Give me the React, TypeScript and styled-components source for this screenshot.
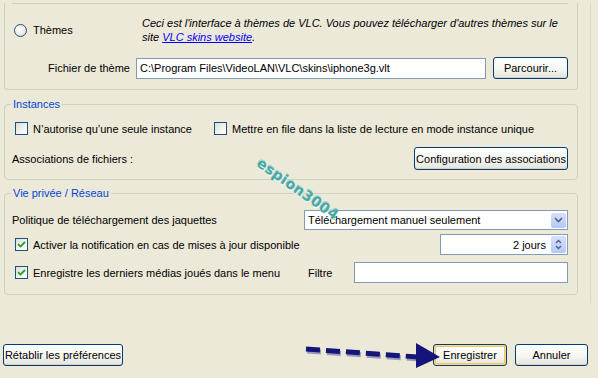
import React from "react";
import styled, { createGlobalStyle, css } from "styled-components";

const GlobalStyle = createGlobalStyle`
  html, body {
    margin: 0;
    padding: 0;
    background: #ece9d8;
  }
  body {
    font-family: "Liberation Sans", Arial, sans-serif;
    font-size: 11px;
    color: #000;
  }
`;

// whole dialog surface
const Page = styled.div`
  position: relative;
  width: 598px;
  height: 378px;
  overflow: hidden;
  background: #ece9d8;
`;

// scrolling settings area, with its faint right edge
const SettingsPanel = styled.div`
  width: 591px;
  height: 300px;
  border-right: 1px solid #dcd9c8;
  box-sizing: border-box;
`;

// top group, its upper part is cut off by the screenshot
const ThemeBox = styled.div`
  height: 87px;
  margin: 0 12px 0 4px;
  border: 1px solid #d0d0bf;
  border-top: none;
  border-radius: 0 0 4px 4px;
  box-sizing: border-box;
`;

const Separator = styled.div`
  height: 1px;
  margin: 3px 9px 0 7px;
  background: #d0d0bf;
`;

const ThemeRow = styled.div`
  display: grid;
  grid-template-columns: 137px 1fr;
  margin-top: 12px;
  height: 28px;
`;

const RadioLabel = styled.label`
  display: flex;
  align-items: center;
  gap: 6px;
  padding-left: 9px;
`;

const Radio = styled.span`
  width: 11px;
  height: 11px;
  border-radius: 50%;
  border: 1px solid #1c5180;
  background: radial-gradient(circle at 40% 35%, #ffffff 0%, #f0f0ea 45%, #d6d6ce 100%);
`;

const Description = styled.p`
  margin: 0;
  font-style: italic;
  line-height: 14px;
  white-space: nowrap;
`;

const Link = styled.a`
  color: #0000ff;
  text-decoration: underline;
`;

const FileRow = styled.div`
  display: flex;
  align-items: center;
  margin-top: 13px;
`;

const RightLabel = styled.span<{ $width: number }>`
  width: ${(p) => p.$width}px;
  text-align: right;
  margin-right: 6px;
`;

const TextField = styled.div<{ $width: number; $align?: string }>`
  width: ${(p) => p.$width}px;
  height: 21px;
  box-sizing: border-box;
  border: 1px solid #7f9db9;
  background: #fff;
  display: flex;
  align-items: center;
  justify-content: ${(p) => p.$align || "flex-start"};
  padding: 0 3px;
  white-space: nowrap;
  overflow: hidden;
`;

const Button = styled.button<{ $width: number; $height?: number; $default?: boolean }>`
  width: ${(p) => p.$width}px;
  height: ${(p) => p.$height || 22}px;
  box-sizing: border-box;
  padding: 0;
  font: inherit;
  color: #000;
  border: 1px solid #003c74;
  border-radius: 3px;
  background: linear-gradient(#ffffff 0%, #f4f4f0 60%, #e3e2da 100%);
  box-shadow: inset 0 -1px 0 #d6d0c5;
  white-space: nowrap;
  ${(p) =>
    p.$default &&
    css`
      box-shadow: inset 0 0 0 1px #fbd98a, inset 0 0 0 2px #f5c45e;
    `}
`;

const GroupBox = styled.fieldset<{ $top: number }>`
  margin: ${(p) => p.$top}px 12px 0 4px;
  padding: 0 9px 0 0;
  border: 1px solid #d0d0bf;
  border-radius: 4px;
  min-width: 0;
`;

const Legend = styled.legend`
  margin-left: 6px;
  padding: 0 2px;
  color: #0046d5;
  line-height: 13px;
`;

const Row = styled.div<{ $mt: number; $mb?: number; $pl?: number }>`
  display: flex;
  align-items: center;
  justify-content: space-between;
  margin-top: ${(p) => p.$mt}px;
  margin-bottom: ${(p) => p.$mb ?? 0}px;
  padding-left: ${(p) => p.$pl ?? 7}px;
`;

const CheckRow = styled(Row)`
  justify-content: flex-start;
  gap: 22px;
`;

const CheckLabel = styled.label`
  display: flex;
  align-items: center;
  gap: 5px;
  white-space: nowrap;
`;

const Box = styled.span`
  width: 11px;
  height: 11px;
  border: 1px solid #1c5180;
  background: linear-gradient(135deg, #dcdcd7 0%, #f4f4f0 60%, #ffffff 100%);
  display: flex;
  align-items: center;
  justify-content: center;
`;

const Inline = styled.div`
  display: flex;
  align-items: center;
`;

const FieldLabel = styled.span`
  width: 46px;
`;

const DropButton = styled.span`
  width: 15px;
  height: 15px;
  margin-right: -2px;
  border-radius: 2px;
  background: linear-gradient(#d6e2fc, #b4c8f6);
  display: flex;
  align-items: center;
  justify-content: center;
`;

const SpinButton = styled(DropButton)`
  height: 17px;
  margin-left: 5px;
`;

const Footer = styled.div`
  display: flex;
  align-items: center;
  gap: 8px;
  margin-top: 41px;
  padding: 0 10px 0 3px;
`;

const Spacer = styled.div`
  flex: 1;
`;

// overlays painted on the screenshot
const Watermark = styled.div`
  position: absolute;
  left: 250px;
  top: 181px;
  transform: rotate(35deg);
  font-family: "DejaVu Sans", sans-serif;
  font-weight: bold;
  font-size: 14px;
  letter-spacing: 0.5px;
  color: #4aa7a2;
  text-shadow: 1px 1px 0 #e8f6f4, -1px -1px 0 #9fd4cf;
  pointer-events: none;
`;

const ArrowLayer = styled.svg`
  position: absolute;
  left: 300px;
  top: 338px;
`;

const Check = () => (
  <svg width="9" height="9" viewBox="0 0 9 9">
    <path d="M1 4.2 L3.4 6.6 L8 2" fill="none" stroke="#21a121" strokeWidth="1.8" />
  </svg>
);

const Checkbox = ({ checked, children }: { checked?: boolean; children: React.ReactNode }) => (
  <CheckLabel>
    <Box>{checked && <Check />}</Box>
    {children}
  </CheckLabel>
);

export default function App() {
  return (
    <Page>
      <GlobalStyle />
      <SettingsPanel>
        <ThemeBox>
          <Separator />
          <ThemeRow>
            <RadioLabel>
              <Radio />
              Thèmes
            </RadioLabel>
            <Description>
              Ceci est l'interface à thèmes de VLC. Vous pouvez télécharger d'autres thèmes sur le
              <br />
              site <Link>VLC skins website</Link>.
            </Description>
          </ThemeRow>
          <FileRow>
            <RightLabel $width={125}>Fichier de thème</RightLabel>
            <TextField $width={350}>C:\Program Files\VideoLAN\VLC\skins\iphone3g.vlt</TextField>
            <Button $width={75} style={{ marginLeft: 7 }}>
              Parcourir...
            </Button>
          </FileRow>
        </ThemeBox>

        <GroupBox $top={8}>
          <Legend>Instances</Legend>
          <CheckRow $mt={11} $pl={10}>
            <Checkbox>N’autorise qu’une seule instance</Checkbox>
            <Checkbox>Mettre en file dans la liste de lecture en mode instance unique</Checkbox>
          </CheckRow>
          <Row $mt={12} $mb={9}>
            <span>Associations de fichiers :</span>
            <Button $width={154} $height={23}>
              Configuration des associations
            </Button>
          </Row>
        </GroupBox>

        <GroupBox $top={7}>
          <Legend>Vie privée / Réseau</Legend>
          <Row $mt={10}>
            <span>Politique de téléchargement des jaquettes</span>
            <TextField $width={264} $align="space-between" style={{ height: 20 }}>
              Téléchargement manuel seulement
              <DropButton>
                <svg width="9" height="6" viewBox="0 0 9 6">
                  <path d="M1 1 L4.5 4.5 L8 1" fill="none" stroke="#4d6185" strokeWidth="1.6" />
                </svg>
              </DropButton>
            </TextField>
          </Row>
          <Row $mt={4} $pl={10}>
            <Checkbox checked>Activer la notification en cas de mises à jour disponible</Checkbox>
            <TextField $width={128} $align="flex-end">
              2 jours
              <SpinButton>
                <svg width="7" height="11" viewBox="0 0 7 11">
                  <path d="M1 4 L3.5 1.5 L6 4 M1 7 L3.5 9.5 L6 7" fill="none" stroke="#4d6185" strokeWidth="1.4" />
                </svg>
              </SpinButton>
            </TextField>
          </Row>
          <Row $mt={7} $mb={11} $pl={10}>
            <Checkbox checked>Enregistre les derniers médias joués dans le menu</Checkbox>
            <Inline>
              <FieldLabel>Filtre</FieldLabel>
              <TextField $width={214} />
            </Inline>
          </Row>
        </GroupBox>
      </SettingsPanel>

      <Footer>
        <Button $width={120}>Rétablir les préférences</Button>
        <Spacer />
        <Button $width={74} $default>
          Enregistrer
        </Button>
        <Button $width={73}>Annuler</Button>
      </Footer>

      <Watermark>espion3004</Watermark>

      <ArrowLayer width="145" height="36" viewBox="0 0 145 36">
        <line x1="6" y1="11" x2="118" y2="19" stroke="#9a9ab8" strokeWidth="5" strokeDasharray="14 6" transform="translate(1 2)" />
        <line x1="6" y1="11" x2="118" y2="19" stroke="#14147a" strokeWidth="5" strokeDasharray="14 6" />
        <polygon points="116,5 140,19 116,30" fill="#14147a" />
      </ArrowLayer>
    </Page>
  );
}
